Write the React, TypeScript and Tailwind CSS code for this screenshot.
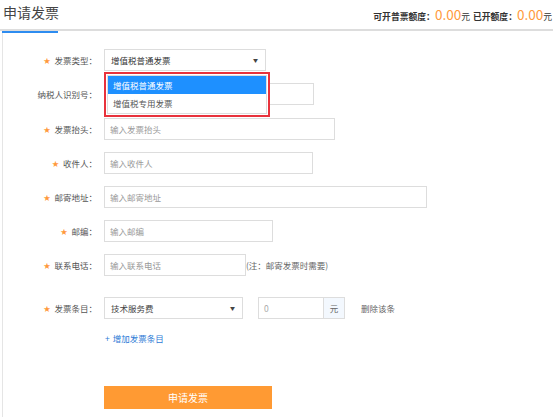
import React from 'react';

const font = { fontFamily: '"Noto Sans CJK SC", "Noto Sans", sans-serif' };

const Label = ({ text, star = true }: { text: string; star?: boolean }) => (
  <div className="flex w-[101px] shrink-0 items-center justify-end pr-[7px] text-[8.5px] text-[#555]">
    {star && <span className="mr-[4px] text-[7px] text-[#ff9a3c]">★</span>}
    <span>{text}：</span>
  </div>
);

const TextInput = ({ w, placeholder }: { w: string; placeholder: string }) => (
  <div
    className={`flex h-[22px] items-center border border-[#ddd] bg-white px-[5px] text-[8.5px] text-[#999] ${w}`}
  >
    {placeholder}
  </div>
);

export default function App() {
  return (
    <div className="h-[417px] w-[553px] overflow-hidden bg-white" style={font}>
      {/* header */}
      <div className="relative flex h-[31px] items-start justify-between border-b-2 border-[#ddd]">
        <div className="relative ml-[2px] h-[31px] w-[56px]">
          <span className="absolute left-[1px] top-[2px] whitespace-nowrap text-[14px] leading-[20px] text-[#444]">
            申请发票
          </span>
          <div className="absolute bottom-[-2px] left-0 h-[2px] w-[56px] bg-[#2d8cf0]" />
        </div>
        <div className="mr-[1px] mt-[4px] flex items-baseline whitespace-nowrap text-[8.8px] font-bold text-[#333]">
          <span>可开普票额度：</span>
          <span className="text-[13.5px] font-normal text-[#ff9a3c]">0.00</span>
          <span className="font-normal">元</span>
          <span className="ml-[3px]">已开额度：</span>
          <span className="text-[13.5px] font-normal text-[#ff9a3c]">0.00</span>
          <span className="font-normal">元</span>
        </div>
      </div>

      {/* panel */}
      <div className="ml-[2px] h-[386px] border-l border-[#e5e5e5] pt-[18px]">
        <div className="flex flex-col gap-[12px]">
          <div className="relative flex items-center">
            <Label text="发票类型" />
            <div className="flex h-[22px] w-[162px] items-center justify-between border border-[#ddd] bg-white pl-[6px] pr-[7px] text-[8.5px] text-[#333]">
              <span>增值税普通发票</span>
              <span className="text-[5px] text-[#444]">▼</span>
            </div>
            <div className="absolute left-[101px] top-[23px] z-10 w-[166px] border-2 border-[#e8323c] bg-white p-px">
              <div className="border border-[#ddd]">
                <div className="flex h-[18px] items-center bg-[#1e90ff] pl-[5px] text-[8.5px] text-white">增值税普通发票</div>
                <div className="flex h-[19px] items-center pl-[5px] text-[8.5px] text-[#555]">增值税专用发票</div>
              </div>
            </div>
          </div>

          <div className="flex items-center">
            <Label text="纳税人识别号" star={false} />
            <TextInput w="w-[210px]" placeholder="" />
          </div>

          <div className="mt-[1px] flex items-center">
            <Label text="发票抬头" />
            <TextInput w="w-[231px]" placeholder="输入发票抬头" />
          </div>

          <div className="flex items-center">
            <Label text="收件人" />
            <TextInput w="w-[209px]" placeholder="输入收件人" />
          </div>

          <div className="flex items-center">
            <Label text="邮寄地址" />
            <TextInput w="w-[323px]" placeholder="输入邮寄地址" />
          </div>

          <div className="flex items-center">
            <Label text="邮编" />
            <TextInput w="w-[169px]" placeholder="输入邮编" />
          </div>

          <div className="flex items-center">
            <Label text="联系电话" />
            <TextInput w="w-[142px]" placeholder="输入联系电话" />
            <span className="text-[8.5px] text-[#666]">(注：邮寄发票时需要)</span>
          </div>
        </div>

        <div className="mt-[21px] flex items-center">
          <Label text="发票条目" />
          <div className="flex h-[22px] w-[139px] items-center justify-between border border-[#ddd] bg-white pl-[6px] pr-[7px] text-[8.5px] text-[#444]">
            <span>技术服务费</span>
            <span className="text-[5px] text-[#444]">▼</span>
          </div>
          <div className="ml-[15px] flex h-[22px]">
            <div className="flex w-[66px] items-center border border-[#ddd] px-[5px] text-[8.5px] text-[#aaa]">0</div>
            <div className="flex w-[21px] items-center justify-center border border-l-0 border-[#ddd] bg-[#f3f8fe] text-[8.5px] text-[#666]">
              元
            </div>
          </div>
          <span className="ml-[16px] text-[8.5px] text-[#666]">删除该条</span>
        </div>

        <div className="mt-[13px] flex items-center pl-[102px] text-[8.5px] text-[#2d7ad6]">
          <span className="mr-[3px]">+</span>
          <span>增加发票条目</span>
        </div>

        <div className="mt-[41px] pl-[101px]">
          <div className="flex h-[23px] w-[168px] items-center justify-center bg-[#ff9a33] text-[10px] text-white">
            申请发票
          </div>
        </div>
      </div>
    </div>
  );
}
